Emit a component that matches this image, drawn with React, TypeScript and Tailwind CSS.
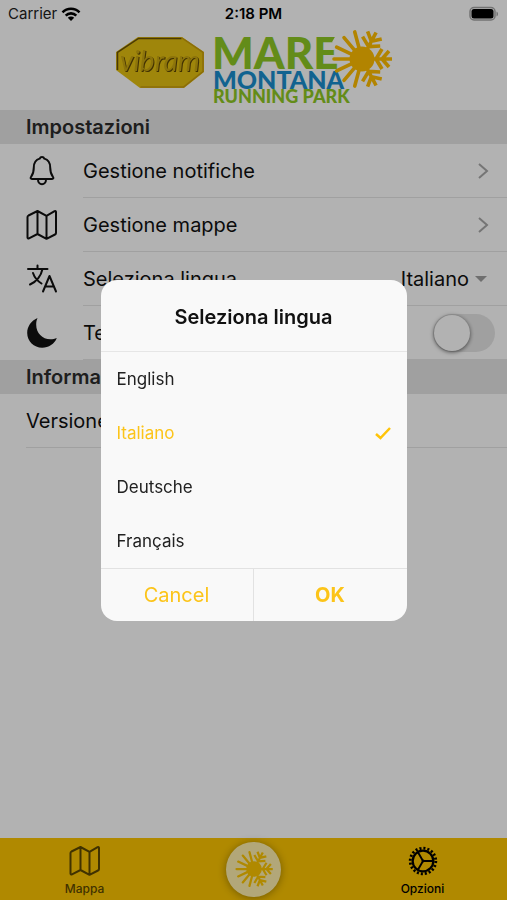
import { useState } from 'react';

const LANGUAGES = ['English', 'Italiano', 'Deutsche', 'Français'];

// Rays on the left half of the emblem, in degrees
const RAYS = [105, 130, 155, 180, 205, 230, 255];

// ── Icons ─────────────────────────────────────────────────────────────────────

function SunFlake({ halo = false }: { halo?: boolean }) {
  return (
    <g strokeLinecap="round" fill="none">
      {/* White gap that the rays cut out of the lettering */}
      {halo && (
        <g stroke="#fff" strokeWidth={6}>
          {[180, 205, 230].map((a) => (
            <line key={a} x1={12} y1={0} x2={29} y2={0} transform={`rotate(${a})`} />
          ))}
          <path d="M-22-24-27-15" strokeWidth={7} strokeLinecap="butt" />
        </g>
      )}
      <circle r={12.500} fill="currentColor" />
      <g stroke="currentColor" strokeWidth={3.600}>
        {RAYS.map((a) => (
          <line key={a} x1={10} y1={0} x2={28} y2={0} transform={`rotate(${a})`} />
        ))}
      </g>
      <g stroke="currentColor" strokeWidth={3.600} strokeLinecap="butt">
        {[-62, 0, 62].map((a) => (
          <path key={a} d="M10 0H30M14 0l6-10M14 0l6 10M20 0l7-8M20 0l7 8" transform={`rotate(${a})`} />
        ))}
      </g>
    </g>
  );
}

function BellIcon() {
  return (
    <svg className="size-8" viewBox="0 0 32 32" fill="none" stroke="currentColor" strokeWidth={2} strokeLinecap="round" strokeLinejoin="round" aria-hidden="true">
      <path d="M16 2c-1.500 0-2 .8-2.300 1.600C9.800 4.700 7.800 8 7.800 12.500c0 6-1.500 7.800-2.800 9.500-.8 1.100-.3 2 .9 2h20.200c1.200 0 1.700-.9.900-2-1.300-1.700-2.800-3.500-2.800-9.500 0-4.500-2-7.800-5.900-8.900C18 2.800 17.500 2 16 2z" />
      <path d="M12 24.500c0 2.700 1.700 4.800 4 4.800s4-2.100 4-4.800" />
    </svg>
  );
}

function MapIcon() {
  return (
    <svg className="size-8" viewBox="0 0 32 32" fill="none" stroke="currentColor" strokeWidth={2} strokeLinecap="round" strokeLinejoin="round" aria-hidden="true">
      <path d="M11.500 2 2.500 6.500c-.7.400-1 .8-1 1.500v20.500c0 .9.700 1.200 1.500.8l8.500-4.300 9 4.800 8.500-4.300c.8-.4 1-.9 1-1.500V3c0-.9-.6-1.200-1.400-.8l-8.100 4.600zM11.500 2v23M20.500 6.800v23" />
    </svg>
  );
}

function TranslateIcon() {
  return (
    <svg className="size-8" viewBox="0 0 32 32" fill="none" stroke="currentColor" strokeWidth={2} strokeLinecap="round" strokeLinejoin="round" aria-hidden="true">
      <path d="M2 6h19.500M11.500 2.500V6M16.500 6C15 13 10.500 18.500 4 21.500M7 10c1.500 4.500 4.500 8 8.500 10.500" />
      <path d="M17 28.500 23.500 13 30 28.500M19.200 23.500h8.600" />
    </svg>
  );
}

function MoonIcon() {
  return (
    <svg className="size-8" viewBox="0 0 32 32" fill="currentColor" aria-hidden="true">
      <path d="M11.500 1C5.200 3.800 1.200 9.500 1.200 16c0 8.300 6.700 14.700 15 14.700 6.500 0 12.300-3.700 14.600-9.700-2 .9-4 1.300-6.300 1.300-8.300 0-14.300-6.200-14.300-14.500 0-2.300.3-4.600 1.300-6.800z" />
    </svg>
  );
}

function GearIcon() {
  return (
    <svg className="size-8" viewBox="-17 -17 34 34" fill="none" stroke="currentColor" strokeWidth={2} aria-hidden="true">
      <circle r={11} strokeWidth={2.400} />
      <circle r={13.600} strokeWidth={3} strokeDasharray="2.200 2.073" />
      <path d="M0 0H11M0 0-5.500-9.500M0 0-5.500 9.500" />
      <circle r={1.500} fill="currentColor" stroke="none" />
    </svg>
  );
}

function ChevronIcon() {
  return (
    <svg className="h-5 w-3 text-[#a8a8a8]" viewBox="0 0 12 20" fill="none" stroke="currentColor" strokeWidth={2} aria-hidden="true">
      <path d="m2 3 8 7-8 7" />
    </svg>
  );
}

// ── Header ────────────────────────────────────────────────────────────────────

function StatusBar() {
  return (
    <div className="grid h-7 grid-cols-3 items-center px-2 text-[15px] text-black">
      <div className="flex items-center gap-1">
        <span className="text-[#222]">Carrier</span>
        <svg className="h-4 w-5" viewBox="0 0 20 16" fill="none" stroke="currentColor" strokeWidth={2.600} aria-hidden="true">
          <path d="M1.500 6.300a12 12 0 0 1 17 0M4.700 9.600a7.500 7.500 0 0 1 10.600 0" />
          <path d="M10 15 6.800 11.800a4.500 4.500 0 0 1 6.400 0z" fill="currentColor" stroke="none" />
        </svg>
      </div>
      <span className="text-center font-semibold">2:18 PM</span>
      <svg className="h-4 w-[30px] justify-self-end" viewBox="0 0 30 16" aria-hidden="true">
        <rect x="1" y="1.500" width="25" height="12.500" rx="4" fill="none" stroke="#a5a5a5" strokeWidth="1.500" />
        <rect x="2.500" y="3" width="22" height="9.500" rx="2.500" />
        <path d="M27.500 5.500c2 .8 2 4.200 0 5z" fill="#a5a5a5" />
      </svg>
    </div>
  );
}

function Logos() {
  return (
    <div className="flex h-[82px] justify-center">
      <svg className="h-20 w-[280px] overflow-visible" viewBox="114 28 280 80" role="img" aria-label="Vibram Mare Montana Running Park">
        <path d="M138 37h44l22 15v20l-20 16h-44l-24-18V52z" fill="#e4c010" />
        <path d="M117.500 70V52.500L138.500 38.500h43" fill="none" stroke="#6b5206" strokeWidth="1.500" />
        <path d="M182 38l21 14.500v19l-19.500 15.500h-43" fill="none" stroke="#c79c0c" strokeWidth="1.500" />
        <text
          x="120"
          y="71"
          fontFamily="Lato, sans-serif"
          fontSize="28"
          fontStyle="italic"
          fill="#c9a610"
          className="drop-shadow-[1px_1px_0px_#5f4804]"
        >
          vibram
        </text>
        <g fontFamily="Lato, sans-serif" fontWeight="900">
          <text x="212" y="69" fontSize="44" fill="#8fc924">MARE</text>
          <text x="213" y="89" fontSize="25" fill="#1a8fce">MONTANA</text>
          <text x="213" y="103" fontSize="18" fill="#8fc924">RUNNING PARK</text>
        </g>
        <g transform="translate(362 59)" className="text-[#ffbe00]">
          <SunFlake halo />
        </g>
      </svg>
    </div>
  );
}

// ── Settings list ─────────────────────────────────────────────────────────────

function SectionTitle({ children }: { children: React.ReactNode }) {
  return <h2 className="flex h-[34px] items-center bg-[#e6e6e6] px-[26px] text-xl font-semibold text-[#2b2b2b]">{children}</h2>;
}

function Row({ icon, children }: { icon: React.ReactNode; children: React.ReactNode }) {
  return (
    <li className="flex h-[54px] items-center pl-[26px]">
      {icon}
      <div className="ml-[25px] flex h-full flex-1 items-center justify-between border-b border-[#e6e6e6] pr-[18px]">
        {children}
      </div>
    </li>
  );
}

function Settings({ language, onOpenLanguage }: { language: string; onOpenLanguage: () => void }) {
  return (
    <main className="flex-1 text-xl text-[#111]">
      <SectionTitle>Impostazioni</SectionTitle>
      <ul>
        <Row icon={<BellIcon />}>
          <a href="#notifiche" className="flex flex-1 items-center justify-between">Gestione notifiche <ChevronIcon /></a>
        </Row>
        <Row icon={<MapIcon />}>
          <a href="#mappe" className="flex flex-1 items-center justify-between">Gestione mappe <ChevronIcon /></a>
        </Row>
        <Row icon={<TranslateIcon />}>
          <span>Seleziona lingua</span>
          <button type="button" onClick={onOpenLanguage} className="flex items-center gap-1">
            {language}
            <svg className="size-4 text-[#a0a0a0]" viewBox="0 0 16 16" fill="currentColor" aria-hidden="true">
              <path d="M2 5h12l-6 6z" />
            </svg>
          </button>
        </Row>
        <Row icon={<MoonIcon />}>
          <label htmlFor="dark">Tema scuro</label>
          <input
            id="dark"
            type="checkbox"
            role="switch"
            className="-mr-1.5 h-[38px] w-[62px] appearance-none rounded-full bg-[#e6e6e6] before:m-px before:block before:size-9 before:rounded-full before:bg-white before:shadow-[0_1px_4px_rgba(0,0,0,0.6)] checked:before:ml-6"
          />
        </Row>
      </ul>
      <SectionTitle>Informazioni</SectionTitle>
      <div className="ml-[26px] flex h-[54px] items-center border-b border-[#e6e6e6]">Versione</div>
    </main>
  );
}

function TabBar() {
  return (
    <nav className="grid h-[62px] grid-cols-3 bg-[#fcc500] text-xs font-medium">
      <a href="#mappa" className="flex flex-col items-center justify-center gap-1 pt-1 text-[#5c4800]">
        <MapIcon />
        Mappa
      </a>
      <a href="#home" aria-label="Home" className="flex items-center justify-center">
        <span className="flex size-[55px] items-center justify-center rounded-full bg-[#fff0ae] text-[#fcc500] shadow-[0_1px_8px_rgba(0,0,0,0.35)]">
          <svg className="size-10" viewBox="-32 -32 64 64" aria-hidden="true">
            <SunFlake />
          </svg>
        </span>
      </a>
      <a href="#opzioni" className="flex flex-col items-center justify-center gap-1 pt-1 text-black">
        <GearIcon />
        Opzioni
      </a>
    </nav>
  );
}

// ── Language dialog ───────────────────────────────────────────────────────────

function LanguageDialog({
  selected,
  onSelect,
  onClose,
}: {
  selected: string;
  onSelect: (value: string) => void;
  onClose: () => void;
}) {
  return (
    <div className="fixed inset-0 z-50 flex items-center justify-center bg-black/30">
      <div role="dialog" aria-labelledby="dialog-title" className="w-[306px] overflow-hidden rounded-2xl bg-[#f9f9f9]">
        <h1 id="dialog-title" className="flex h-[72px] items-center justify-center border-b border-[#e6e6e6] pt-1 text-xl font-semibold text-[#111]">
          Seleziona lingua
        </h1>
        <div role="radiogroup" aria-labelledby="dialog-title">
          {LANGUAGES.map((name) => (
            <label
              key={name}
              className="flex h-[54px] items-center justify-between px-4 text-[17px] leading-7 text-[#222] has-checked:text-[#fcc419]"
            >
              {name}
              <input
                type="radio"
                name="language"
                className="peer sr-only"
                checked={selected === name}
                onChange={() => onSelect(name)}
              />
              <svg className="hidden size-4 peer-checked:block" viewBox="0 0 16 16" fill="none" stroke="#ffc409" strokeWidth={2.500} aria-hidden="true">
                <path d="m1 9 4.500 4L15 3" />
              </svg>
            </label>
          ))}
        </div>
        <div className="grid h-[53px] grid-cols-2 border-t border-[#e2e2e2] text-xl text-[#fcc419]">
          <button type="button" onClick={onClose} className="border-r border-[#e2e2e2]">Cancel</button>
          <button type="button" onClick={onClose} className="font-bold">OK</button>
        </div>
      </div>
    </div>
  );
}

export default function App() {
  const [language, setLanguage] = useState('Italiano');
  const [open, setOpen] = useState(true);

  return (
    <div className="flex min-h-screen flex-col bg-white font-['Inter',sans-serif]">
      <header>
        <StatusBar />
        <Logos />
      </header>
      <Settings language={language} onOpenLanguage={() => setOpen(true)} />
      <TabBar />
      {open && <LanguageDialog selected={language} onSelect={setLanguage} onClose={() => setOpen(false)} />}
    </div>
  );
}
